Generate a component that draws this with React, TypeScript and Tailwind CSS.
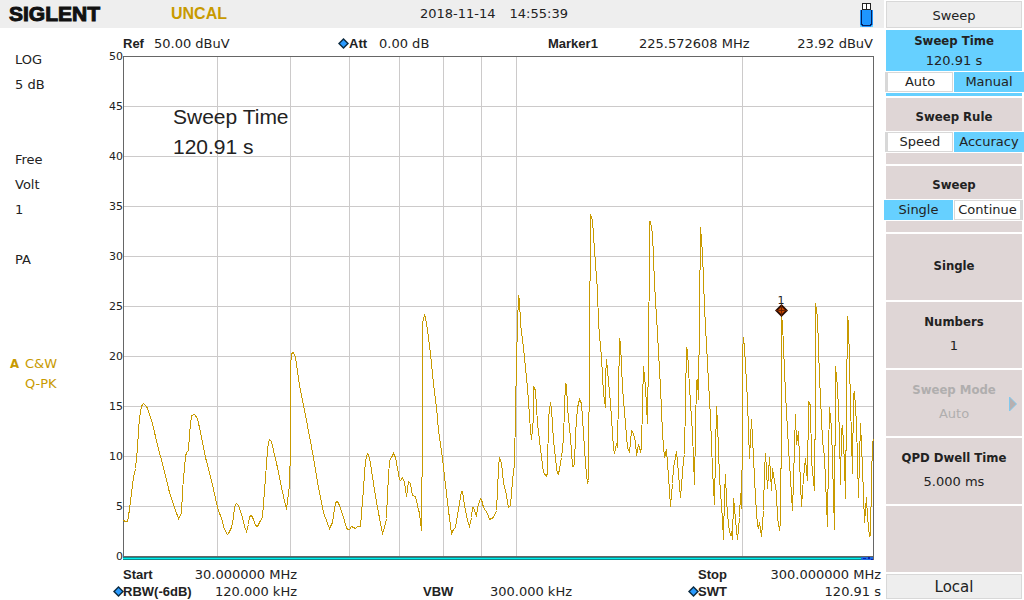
import React, { useState } from "react";

// trace samples as "x,y" in plot units (x 123-873, y 56 = 50 dBuV, y 556 = 0 dBuV)
const TRACE = `
123,520 125,521 127,521 128,516 131,493 133,477 135,468 137,447 138,430 139,417 141,406 142,404 143,403 146,406
147,408 152,423 157,445 163,467 169,492 174,507 178,518 179,516 181,513 182,490 184,467 185,456 186,452 188,450
189,433 191,415 194,414 197,418 200,432 205,457 211,480 217,507 221,518 224,529 227,534 228,533 231,527 233,517
234,506 236,503 238,505 242,517 244,526 246,531 248,524 249,516 251,515 253,519 255,525 257,526 259,522 262,517
263,503 265,477 267,450 268,442 269,439 271,441 273,450 277,467 281,487 286,509 289,485 290,447 290,367 291,353
293,352 295,357 299,385 302,400 305,415 313,457 318,487 323,512 327,523 329,528 332,522 333,515 335,502 337,501
339,505 343,517 346,527 347,529 349,529 351,526 355,528 357,526 360,526 361,513 363,488 364,473 365,460 367,453
368,454 370,463 373,483 377,507 380,523 382,533 384,527 386,518 387,493 389,460 391,457 393,453 395,457 397,468
399,479 400,480 402,477 404,482 406,496 408,481 410,483 412,495 415,496 417,505 419,513 421,530 422,427 422,322
424,315 425,317 427,330 430,353 433,383 436,407 438,430 442,458 446,493 448,510 451,533 453,529 455,527 457,515
459,502 461,491 462,491 464,505 467,520 469,526 471,517 472,507 473,507 476,516 477,507 480,498 481,499 483,507
487,513 489,519 493,517 496,510 497,490 498,467 499,457 501,463 503,482 506,495 508,507 510,505 512,480 514,463
515,413 516,360 517,325 518,295 519,300 520,323 523,347 527,387 530,430 531,439 533,417 533,386 535,390 537,423
541,457 543,472 546,476 547,472 548,417 550,402 551,408 553,440 556,467 557,473 558,474 561,457 563,438 564,407
565,383 566,384 567,407 570,437 572,466 574,465 575,433 577,407 579,399 581,403 583,433 585,463 587,483 588,480
589,347 590,218 590,214 592,220 594,250 597,290 598,323 601,357 603,393 605,407 605,377 606,359 607,370 610,403
612,433 613,448 614,453 616,443 617,447 618,393 619,340 619,338 620,343 622,387 625,423 627,447 629,452 631,430
633,433 635,442 636,455 638,444 640,451 641,447 642,403 643,366 645,387 647,423 648,353 649,252 649,221 650,221
652,233 654,283 657,333 660,387 662,433 664,457 666,449 667,463 669,490 670,506 672,483 673,466 674,463 676,451
678,473 680,497 683,460 684,454 685,400 686,347 687,350 689,387 692,433 694,484 695,430 696,380 697,379 698,399
699,313 700,229 700,227 702,253 704,307 707,363 710,417 712,470 714,504 715,453 716,406 717,423 719,477 722,520
723,539 724,493 725,474 726,500 728,525 730,535 731,531 732,539 733,498 734,507 736,530 737,539 739,517 740,493
741,508 742,433 742,350 743,337 744,347 747,400 748,430 749,458 751,419 752,437 755,497 757,525 758,527 759,522
761,536 763,510 764,470 765,453 766,470 767,488 769,457 771,490 772,468 774,480 776,493 777,517 779,530 780,522
781,417 781,315 782,323 785,393 788,447 792,510 793,480 795,414 796,444 798,431 799,460 801,506 803,477 805,458
806,471 807,480 808,401 810,405 811,460 814,490 815,390 815,303 817,317 819,377 822,440 824,457 827,526 828,453
829,407 831,427 834,529 835,366 837,387 839,433 840,484 841,430 842,425 844,463 845,498 846,403 847,316 848,323
850,403 852,473 853,395 854,391 856,423 858,497 860,423 862,467 864,522 866,497 867,517 869,536 870,535 871,480
872,442 873,439`;

const Y_LABELS = [50, 45, 40, 35, 30, 25, 20, 15, 10, 5, 0];
const GRID_X = [217, 290, 349, 399, 443, 481, 516, 742];
const GRID_Y = [106, 156, 206, 256, 306, 356, 406, 456, 506];

const MENU_BOLD = "font-['DejaVu_Sans_Condensed','DejaVu_Sans',sans-serif] font-bold";
const LABEL_BOLD = "font-['Liberation_Sans',Arial,sans-serif] font-bold";

function Diamond() {
  return (
    <svg aria-hidden="true" viewBox="0 0 11 11" className="h-[11px] w-[11px] shrink-0">
      <path d="M5.500 0L11 5.500L5.500 11L0 5.500Z" fill="#0a2a40" />
      <path d="M5.500 2L9 5.500L5.500 9L2 5.500Z" fill="#2a9bff" />
    </svg>
  );
}

function UsbIcon() {
  return (
    <svg aria-label="USB drive" viewBox="0 0 13 24" className="h-6 w-[13px]" shapeRendering="crispEdges">
      <rect x="2" y="0" width="9" height="8" fill="#222" />
      <rect x="3" y="1" width="3" height="5" fill="#fff" />
      <rect x="7" y="1" width="3" height="5" fill="#fff" />
      <rect x="0" y="7" width="13" height="17" fill="#1e96ff" />
      <path d="M1 7h1v14h1v1h7v-1h1V7h1v15h-1v1H2v-1H1z" fill="#06205a" />
      <path d="M0 22h1v1h1v1H0zM13 22h-1v1h-1v1h2z" fill="#66d0ff" />
    </svg>
  );
}

function Plot() {
  return (
    <svg
      role="img"
      aria-label="Spectrum trace"
      viewBox="123 56 751 504"
      className="block w-full"
      shapeRendering="crispEdges"
    >
      <g fill="#cccaca">
        {GRID_X.map((x) => (
          <rect key={x} x={x} y="56" width="1" height="500" />
        ))}
        {GRID_Y.map((y) => (
          <rect key={y} x="123" y={y} width="750" height="1" />
        ))}
      </g>
      <g fill="#666">
        <rect x="123" y="56" width="751" height="1" />
        <rect x="123" y="56" width="1" height="500" />
        <rect x="873" y="56" width="1" height="504" />
        <rect x="123" y="556" width="751" height="2" />
      </g>
      {/* sweep progress */}
      <rect x="123" y="557" width="750" height="3" fill="#0e8a8a" />
      <rect x="123" y="558" width="750" height="1" fill="#00f0f0" />
      <rect x="861" y="557" width="12" height="3" fill="#1e6be0" />
      <path d="M863 558h3v1h-3zM868 557h2v2h-2zM871 559h2v1h-2z" fill="#0a1fb0" />
      <polyline
        points={TRACE}
        transform="translate(0.5 0.5)"
        fill="none"
        stroke="#c89a00"
        strokeWidth="1"
      />
      <g shapeRendering="auto">
        <path d="M781.500 304L788 310.500L781.500 317L775 310.500Z" fill="#260a00" />
        <path d="M781.500 306.500L785.500 310.500L781.500 314.500L777.500 310.500Z" fill="#c84600" />
        <path d="M781.500 305V316M776 310.500H787" stroke="#6b2200" strokeWidth="1" />
        <text
          x="781"
          y="304"
          textAnchor="middle"
          fontSize="11"
          fill="#222"
          className="font-['DejaVu_Sans',sans-serif]"
        >
          1
        </text>
      </g>
    </svg>
  );
}

function Setting({ name, value, dot = false }: { name: string; value: string; dot?: boolean }) {
  return (
    <div className="flex justify-between whitespace-nowrap leading-[17px]">
      <dt className={`flex items-center ${LABEL_BOLD}`}>
        <span className="flex w-[10px]">{dot && <Diamond />}</span>
        {name}
      </dt>
      <dd>{value}</dd>
    </div>
  );
}

function Toggle({
  label,
  options,
  value,
  onChange,
}: {
  label: string;
  options: [string, string];
  value: string;
  onChange: (v: string) => void;
}) {
  return (
    <div role="group" aria-label={label} className="my-px grid h-5 grid-cols-[69fr_70fr] gap-px">
      {options.map((o, i) => {
        const edge = i === 0 ? "ml-px border-l-[3px]" : "mr-px border-r-[3px]";
        return (
          <button
            key={o}
            type="button"
            aria-pressed={o === value}
            onClick={() => onChange(o)}
            className={
              o === value
                ? "bg-[#66d0ff] leading-[18px]"
                : `border border-[#d8d8d8] bg-white leading-4 ${edge}`
            }
          >
            {o}
          </button>
        );
      })}
    </div>
  );
}

function SoftKey({
  title,
  value,
  disabled = false,
}: {
  title?: string;
  value?: string;
  disabled?: boolean;
}) {
  return (
    <button
      type="button"
      disabled={disabled}
      aria-label={title ?? "Empty key"}
      className="relative mx-[2px] flex h-[66px] flex-col items-center justify-center gap-2 bg-[#dfd6d6] pb-[2px] leading-4 disabled:text-[#b0aeae]"
    >
      {title && <span className={MENU_BOLD}>{title}</span>}
      {value && <span>{value}</span>}
      {disabled && (
        <svg aria-hidden="true" viewBox="0 0 8 16" className="absolute right-[5px] top-[26px] h-4 w-2">
          <path d="M0.500 1L7.500 8L0.500 15Z" fill="#b8b0b0" stroke="#80c8ee" strokeWidth="1" />
        </svg>
      )}
    </button>
  );
}

export default function App() {
  const [time, setTime] = useState("Manual");
  const [rule, setRule] = useState("Accuracy");
  const [sweep, setSweep] = useState("Single");

  return (
    <div className="flex min-h-screen bg-white font-['DejaVu_Sans',Verdana,sans-serif] text-[13px] text-[#222]">
      <main className="min-w-0 flex-1">
        <header className="flex h-7 items-center bg-[#eee]">
          <h1 className="w-[162px] shrink-0 pl-[9px] font-['Liberation_Sans',Arial,sans-serif] text-[21px] font-bold leading-7 text-[#111] [-webkit-text-stroke:1px_#111]">
            SIGLENT
          </h1>
          <div className="ml-[9px] w-[249px] font-['Liberation_Sans',Arial,sans-serif] text-base font-bold text-[#c89a00]">
            UNCAL
          </div>
          <time className="flex gap-[14px]">
            <span>2018-11-14</span>
            <span>14:55:39</span>
          </time>
          <div className="ml-auto mr-[11px] mt-[2px]">
            <UsbIcon />
          </div>
        </header>

        <div className="flex">
          <aside className="w-[93px] shrink-0 pl-[15px] pt-[19px] leading-[25px]">
            <p>LOG</p>
            <p>5 dB</p>
            <p className="mt-[50px]">Free</p>
            <p>Volt</p>
            <p>1</p>
            <p className="mt-[25px]">PA</p>
            <div className="-ml-[5px] mt-[82px] grid grid-cols-[15px_1fr] leading-5 text-[#c89a00]">
              <span className={MENU_BOLD}>A</span>
              <span>C&amp;W</span>
              <span className="col-start-2">Q-PK</span>
            </div>
          </aside>

          <section className="min-w-0 flex-1">
            <div className="ml-[30px] mr-[11px] grid h-7 grid-cols-[205fr_210fr_101fr_117fr_117fr] items-center whitespace-nowrap pt-[3px]">
              <div className="flex gap-[10px]">
                <span className={LABEL_BOLD}>Ref</span>
                <span>50.00 dBuV</span>
              </div>
              <div className="flex items-center pl-[10px]">
                <Diamond />
                <span className={LABEL_BOLD}>Att</span>
                <span className="ml-3">0.00 dB</span>
              </div>
              <span className={`pl-[10px] ${LABEL_BOLD}`}>Marker1</span>
              <span>225.572608 MHz</span>
              <span className="text-right">23.92 dBuV</span>
            </div>

            <div className="flex pr-[10px]">
              <div className="-mb-[3px] -mt-[5px] flex w-[30px] shrink-0 flex-col justify-between text-right text-[11px] leading-3">
                {Y_LABELS.map((n) => (
                  <span key={n}>{n}</span>
                ))}
              </div>
              <div className="relative flex-1">
                <Plot />
                <div className="absolute left-[50px] top-[46px] font-['Liberation_Sans',Arial,sans-serif] text-[21px] leading-[30px]">
                  <p>Sweep Time</p>
                  <p>120.91 s</p>
                </div>
              </div>
            </div>

            <div className="ml-5 mr-[3px] flex justify-between pt-[6px]">
              <dl className="w-[184px]">
                <Setting name="Start" value="30.000000 MHz" />
                <Setting name="RBW(-6dB)" value="120.000 kHz" dot />
              </dl>
              <dl className="w-[159px] self-end">
                <Setting name="VBW" value="300.000 kHz" />
              </dl>
              <dl className="w-[193px]">
                <Setting name="Stop" value="300.000000 MHz" />
                <Setting name="SWT" value="120.91 s" dot />
              </dl>
            </div>
          </section>
        </div>
      </main>

      <nav aria-label="Sweep menu" className="flex w-[140px] shrink-0 flex-col gap-[2px] pt-px">
        <h2 className="mx-[2px] h-[27px] border border-[#d8d8d8] bg-[#eee] pt-[2px] text-center leading-6">
          Sweep
        </h2>
        <div>
          <button
            type="button"
            className="mx-[2px] flex h-[41px] w-[136px] flex-col items-center gap-1 bg-[#66d0ff] pt-[3px] leading-4"
          >
            <span className={MENU_BOLD}>Sweep Time</span>
            <span>120.91 s</span>
          </button>
          <Toggle label="Sweep Time" options={["Auto", "Manual"]} value={time} onChange={setTime} />
          <div className="mx-[2px] h-[3px] bg-[#66d0ff]" />
        </div>
        <div>
          <div className={`mx-[2px] h-[33px] bg-[#dfd6d6] pt-[11px] text-center leading-4 ${MENU_BOLD}`}>
            Sweep Rule
          </div>
          <Toggle label="Sweep Rule" options={["Speed", "Accuracy"]} value={rule} onChange={setRule} />
          <div className="mx-[2px] h-[11px] bg-[#dfd6d6]" />
        </div>
        <div>
          <div className={`mx-[2px] h-[33px] bg-[#dfd6d6] pt-[11px] text-center leading-4 ${MENU_BOLD}`}>
            Sweep
          </div>
          <Toggle label="Sweep" options={["Single", "Continue"]} value={sweep} onChange={setSweep} />
          <div className="mx-[2px] h-[11px] bg-[#dfd6d6]" />
        </div>
        <SoftKey title="Single" />
        <SoftKey title="Numbers" value="1" />
        <SoftKey title="Sweep Mode" value="Auto" disabled />
        <SoftKey title="QPD Dwell Time" value="5.000 ms" />
        <SoftKey />
        <button
          type="button"
          className="mx-[2px] h-[25px] border border-[#d8d8d8] bg-[#eee] text-[15px] leading-5"
        >
          Local
        </button>
      </nav>
    </div>
  );
}
